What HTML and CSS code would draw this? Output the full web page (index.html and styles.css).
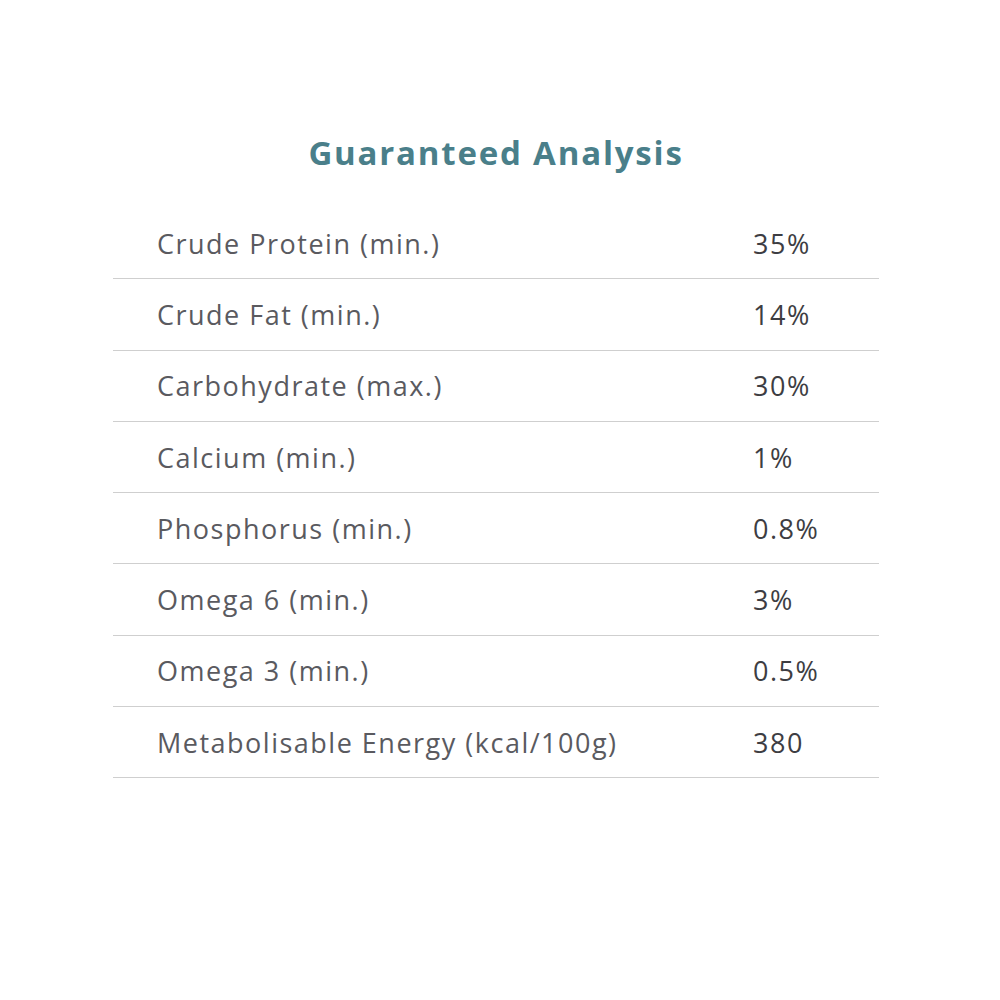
FILE: index.html
```html
<!DOCTYPE html>
<html>
<head>
<meta charset="utf-8">
<link rel="stylesheet" href="styles.css">
</head>
<body>
<div class="wrap">
  <h1 class="title">Guaranteed Analysis</h1>
  <div class="table">
    <div class="row"><span class="label">Crude Protein (min.)</span><span class="val">35%</span></div>
    <div class="row"><span class="label">Crude Fat (min.)</span><span class="val">14%</span></div>
    <div class="row"><span class="label">Carbohydrate (max.)</span><span class="val">30%</span></div>
    <div class="row"><span class="label">Calcium (min.)</span><span class="val">1%</span></div>
    <div class="row"><span class="label">Phosphorus (min.)</span><span class="val">0.8%</span></div>
    <div class="row"><span class="label">Omega 6 (min.)</span><span class="val">3%</span></div>
    <div class="row"><span class="label">Omega 3 (min.)</span><span class="val">0.5%</span></div>
    <div class="row"><span class="label">Metabolisable Energy (kcal/100g)</span><span class="val">380</span></div>
  </div>
</div>
</body>
</html>
```
FILE: styles.css
```css
html, body {
  margin: 0;
  background: #fff;
}
body {
  font-family: "Open Sans", "Noto Sans", sans-serif;
}
.wrap {
  width: 766px;
  margin-left: 113px;
  padding-top: 128px;
}
.title {
  margin: 0;
  text-align: center;
  font-size: 33px;
  font-weight: 700;
  color: #4a7f8a;
  line-height: 50px;
  letter-spacing: 1.8px;
}
.table {
  margin-top: 30px;
}
.row {
  display: grid;
  grid-template-columns: 640px 1fr;
  align-items: center;
  height: 70.3px;
  border-bottom: 1px solid #cfcfcf;
}
.label {
  padding-left: 44px;
  font-size: 27px;
  letter-spacing: 1.5px;
  color: #5a5a5f;
}
.val {
  font-size: 27px;
  font-weight: 500;
  letter-spacing: 1.5px;
  color: #3d3d42;
}
```
